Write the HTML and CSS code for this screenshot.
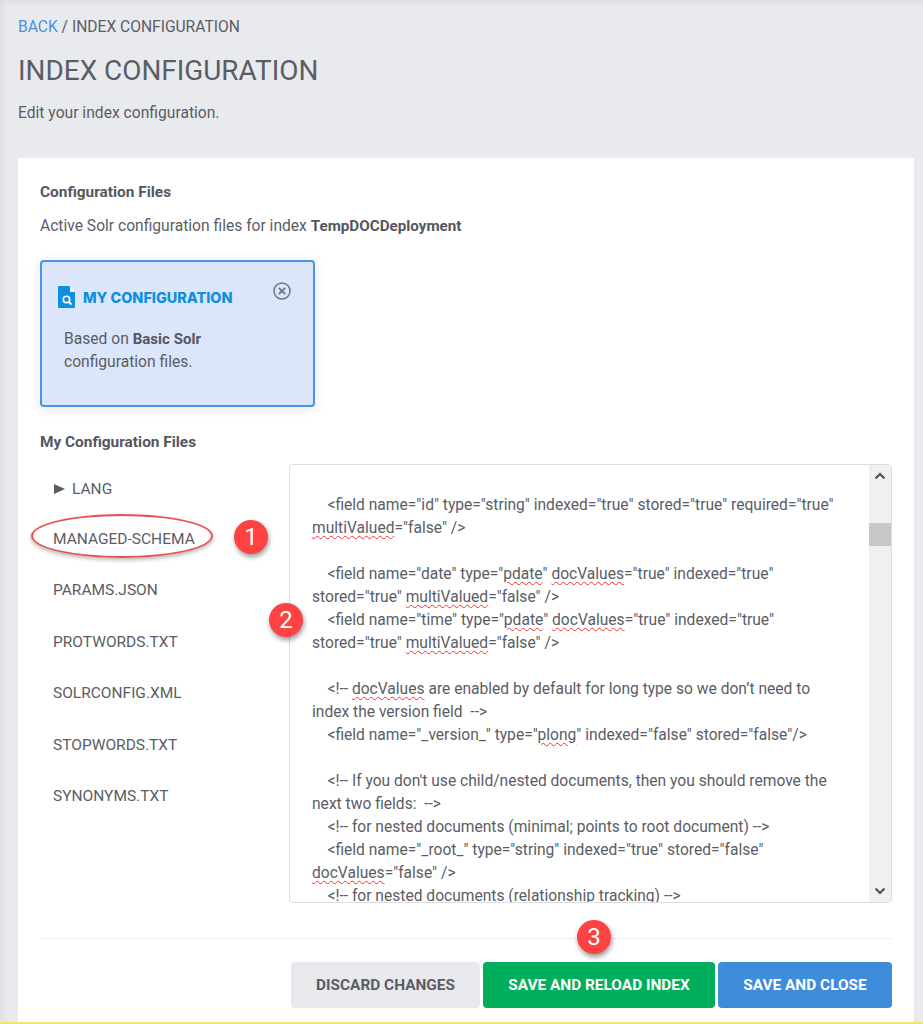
FILE: index.html
```html
<!DOCTYPE html>
<html lang="en">
<head>
<meta charset="utf-8">
<title>Index Configuration</title>
<link rel="stylesheet" href="styles.css">
</head>
<body>
<div class="page">
  <nav class="crumbs"><a class="back">BACK</a> / INDEX CONFIGURATION</nav>
  <h1 class="title">INDEX CONFIGURATION</h1>
  <p class="lead">Edit your index configuration.</p>
  <main class="card">
    <h2 class="label">Configuration Files</h2>
    <p class="active">Active Solr configuration files for index <b>TempDOCDeployment</b></p>
    <section class="config">
      <div class="config-head">
        <svg class="doc-icon" width="18" height="22" viewBox="0 0 18 22"><path d="M1 0h10l6 6v15a1 1 0 0 1-1 1H1a1 1 0 0 1-1-1V1a1 1 0 0 1 1-1z" fill="#0f8fe0"/><path d="M12 0l6 6h-6z" fill="#dbe6fa"/><path d="M12.500 1l4.500 4.500h-4.500z" fill="#fff"/><circle cx="8.500" cy="13.500" r="3.200" fill="none" stroke="#fff" stroke-width="1.600"/><path d="M11 16l2.500 2.500" stroke="#fff" stroke-width="1.800"/></svg>
        <span class="config-name">MY CONFIGURATION</span>
        <svg class="close-icon" width="18" height="18" viewBox="0 0 18 18"><circle cx="9" cy="9" r="8" fill="none" stroke="#66758a" stroke-width="1.500"/><path d="M5.800 5.800l6.400 6.400M12.200 5.800l-6.400 6.400" stroke="#66758a" stroke-width="1.800"/></svg>
      </div>
      <p class="config-text">Based on <b>Basic Solr</b><br>configuration files.</p>
    </section>
    <h2 class="label files-label">My Configuration Files</h2>
    <div class="editor-row">
      <ul class="files">
        <li><span class="tri"></span>LANG</li>
        <li>MANAGED-SCHEMA</li>
        <li>PARAMS.JSON</li>
        <li>PROTWORDS.TXT</li>
        <li>SOLRCONFIG.XML</li>
        <li>STOPWORDS.TXT</li>
        <li>SYNONYMS.TXT</li>
      </ul>
      <div class="editor">
<pre class="code">    &lt;field name="id" type="string" indexed="true" stored="true" required="true"
<i>multiValued</i>="false" /&gt;

    &lt;field name="date" type="<i>pdate</i>" <i>docValues</i>="true" indexed="true"
stored="true" <i>multiValued</i>="false" /&gt;
    &lt;field name="time" type="<i>pdate</i>" <i>docValues</i>="true" indexed="true"
stored="true" <i>multiValued</i>="false" /&gt;

    &lt;!-- <i>docValues</i> are enabled by default for long type so we don’t need to
index the version field  --&gt;
    &lt;field name="_version_" type="<i>plong</i>" indexed="false" stored="false"/&gt;

    &lt;!-- If you don't use child/nested documents, then you should remove the
next two fields:  --&gt;
    &lt;!-- for nested documents (minimal; points to root document) --&gt;
    &lt;field name="_root_" type="string" indexed="true" stored="false"
<i>docValues</i>="false" /&gt;
    &lt;!-- for nested documents (relationship tracking) --&gt;</pre>
        <div class="scrollbar">
          <svg width="12" height="8" viewBox="0 0 12 8"><path d="M1.500 6.500L6 2l4.500 4.500" fill="none" stroke="#505050" stroke-width="2.200"/></svg>
          <div class="thumb"></div>
          <svg class="down" width="12" height="8" viewBox="0 0 12 8"><path d="M1.500 1.500L6 6l4.500-4.500" fill="none" stroke="#505050" stroke-width="2.200"/></svg>
        </div>
      </div>
    </div>
    <footer class="actions">
      <button class="btn discard">DISCARD CHANGES</button>
      <button class="btn reload">SAVE AND RELOAD INDEX</button>
      <button class="btn close">SAVE AND CLOSE</button>
    </footer>
    <div class="ring"></div>
    <div class="badge b1">1</div>
    <div class="badge b2">2</div>
    <div class="badge b3">3</div>
  </main>
</div>
</body>
</html>
```
FILE: styles.css
```css
* { box-sizing: border-box; }
html, body { margin: 0; padding: 0; }
body {
  width: 923px;
  height: 1024px;
  overflow: hidden;
  background: #e9eaee;
  font-family: Roboto, "Liberation Sans", sans-serif;
  color: #5b5d66;
  font-size: 15.500px;
}
.page {
  height: 1024px;
  padding: 17px 9px 0 18px;
  border-bottom: 2px solid #f6e36a;
  box-shadow: inset 6px 6px 6px -5px #d8d9de;
}
.crumbs { line-height: 20px; font-size: 15.600px; }
.back { color: #4a90e2; }
.title { margin: 16px 0 0; font-size: 27.900px; font-weight: 400; line-height: 36px; color: #5b5d66; }
.lead { margin: 12px 0 0; line-height: 24px; font-size: 15.650px; }
.card {
  position: relative;
  margin-top: 33px;
  height: 864px;
  background: #fff;
  padding: 24px 22px 0;
  display: flex;
  flex-direction: column;
}
.label { margin: 0; font-size: 15.400px; font-weight: 700; line-height: 20px; color: #55575f; }
.active { margin: 14px 0 0; line-height: 20px; font-size: 15.620px; }
.active b { color: #55575f; font-size: 15.200px; }
.config {
  margin-top: 24px;
  width: 275px;
  height: 147px;
  background: #dbe6fa;
  border: 2px solid #4a94e0;
  border-radius: 4px;
  padding: 23px 22px 0 16px;
  box-shadow: 0 2px 12px rgba(0,0,0,.1);
}
.config-head { display: flex; align-items: center; height: 24px; }
.doc-icon { flex: none; }
.config-name { margin-left: 7px; font-family: Inter, sans-serif; font-weight: 800; font-size: 14.400px; color: #0f8fe0; flex: 1; white-space: nowrap; }
.close-icon { margin-top: -12px; }
.config-text { margin: 19px 0 0 6px; line-height: 22.500px; font-size: 15.620px; }
.config-text b { color: #55575f; font-size: 15.100px; }
.files-label { margin-top: 25px; }
.editor-row { display: flex; margin-top: 12px; }
.files { list-style: none; margin: 0; padding: 0; width: 249px; flex: none; }
.files li { height: 51.500px; line-height: 20px; padding: 15px 0 0 13px; white-space: nowrap; }
.files li:first-child { height: 49.500px; }
.tri { display: inline-block; border-left: 11px solid #5b5d66; border-top: 5.500px solid transparent; border-bottom: 5.500px solid transparent; margin: 0 7px 0 1px; }
.editor {
  position: relative;
  width: 604px;
  height: 439px;
  border: 1px solid #dcdde0;
  border-radius: 4px;
  overflow: hidden;
  background: #fff;
}
.code { margin: 0; padding: 28.500px 0 0 22px; font-family: Roboto, sans-serif; font-size: 15.600px; line-height: 23px; color: #5b5d66; white-space: pre; }
.code i { font-style: normal; text-decoration: underline wavy #e33; text-decoration-thickness: 1px; text-underline-offset: 2px; }
.scrollbar { position: absolute; top: 0; right: 0; bottom: 0; width: 22px; background: #f0f0f0; display: flex; flex-direction: column; align-items: center; padding-top: 7px; }
.thumb { align-self: stretch; height: 23px; margin-top: 43px; background: #c8c8c8; }
.down { margin-top: auto; margin-bottom: 7px; }
.actions {
  margin-top: 35px;
  padding-top: 23px;
  border-top: 1px solid #f0f0f2;
  display: flex;
  justify-content: flex-end;
  gap: 3px;
  width: 852px;
}
.btn {
  height: 46px;
  border: 0;
  border-radius: 4px;
  font-family: Roboto, sans-serif;
  font-size: 15.400px;
  font-weight: 700;
  color: #fff;
}
.discard { width: 189px; background: #e8e8ed; color: #5b5d66; }
.reload { width: 232px; background: #00ae5b; }
.close { width: 174px; background: #3f8cdb; }
.ring { position: absolute; left: 13px; top: 356px; width: 182px; height: 44px; border: 2.500px solid #e8504f; border-radius: 50%; box-shadow: 0 2px 4px rgba(0,0,0,.3); }
.badge {
  position: absolute;
  width: 34px;
  height: 34px;
  border-radius: 50%;
  background: #ff4242;
  color: #fff;
  font-size: 24px;
  line-height: 34px;
  text-align: center;
  box-shadow: 1px 3px 5px rgba(0,0,0,.4);
}
.b1 { left: 216px; top: 362px; }
.b2 { left: 251px; top: 445px; }
.b3 { left: 559px; top: 762px; }
```
